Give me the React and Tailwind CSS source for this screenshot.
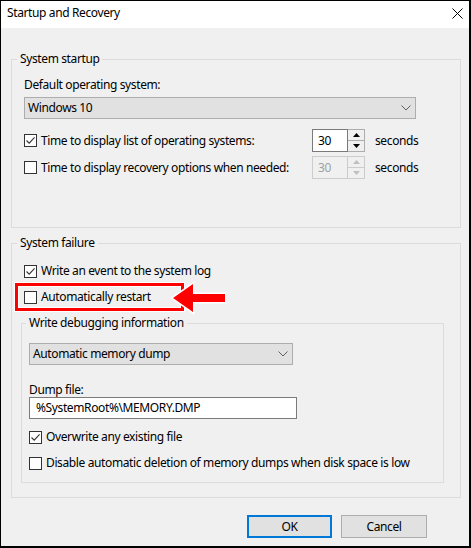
import React from 'react';

const Check = ({ checked }) => (
  <span className="w-[13px] h-[13px] border border-[#333333] bg-white flex items-center justify-center shrink-0">
    {checked && (
      <svg width="11" height="11" viewBox="0 0 11 11">
        <path d="M1.5 5.5 L4.2 8.2 L9.6 2.4" stroke="#333333" fill="none" strokeWidth="1.1" />
      </svg>
    )}
  </span>
);

const CheckRow = ({ checked, children, className = '' }) => (
  <div className={`flex items-center gap-[4px] h-[16px] leading-[16px] ${className}`}>
    <Check checked={checked} />
    <span>{children}</span>
  </div>
);

const Chevron = () => (
  <svg width="10" height="6" viewBox="0 0 10 6">
    <path d="M0.5 0.5 L5 5 L9.5 0.5" stroke="#606060" fill="none" strokeWidth="1" />
  </svg>
);

const Select = ({ value, className }) => (
  <div className={`h-[22px] bg-[#e1e1e1] border border-[#adadad] flex items-center justify-between pl-[3px] pr-[4px] ${className}`}>
    <span>{value}</span>
    <Chevron />
  </div>
);

const Tri = ({ up, disabled }) => (
  <svg width="7" height="4" viewBox="0 0 7 4">
    <path d={up ? 'M0 4 L3.5 0 L7 4 Z' : 'M0 0 L3.5 4 L7 0 Z'} fill={disabled ? '#bfbfbf' : '#000000'} />
  </svg>
);

const Spin = ({ disabled }) => (
  <div className="flex h-[23px] w-[53px]">
    <div
      className={`w-[36px] border pl-[5px] leading-[21px] ${
        disabled ? 'border-[#cccccc] bg-[#f0f0f0] text-[#a0a0a0]' : 'border-[#7a7a7a] bg-white'
      }`}
    >
      30
    </div>
    <div className={`w-[17px] flex flex-col border border-l-0 ${disabled ? 'border-[#cccccc]' : 'border-[#adadad]'}`}>
      <div className={`flex-1 flex items-center justify-center border-b ${disabled ? 'border-[#cccccc]' : 'border-[#adadad]'}`}>
        <Tri up disabled={disabled} />
      </div>
      <div className="flex-1 flex items-center justify-center">
        <Tri disabled={disabled} />
      </div>
    </div>
  </div>
);

export default function App() {
  return (
    <div className="w-[471px] h-[548px] flex flex-col border-l border-t border-r-2 border-b-2 border-black text-[12px] tracking-[-0.38px] text-black font-['Noto_Sans',sans-serif] relative">
      {/* title bar */}
      <div className="h-[27px] bg-white flex justify-between items-start pl-[6px] pr-[6px] pt-[4px] leading-[16px]">
        <span>Startup and Recovery</span>
        <svg width="11" height="11" viewBox="0 0 11 11" className="mt-[3px]">
          <path d="M0.5 0.5 L10.5 10.5 M10.5 0.5 L0.5 10.5" stroke="#000" strokeWidth="1" />
        </svg>
      </div>

      <div className="flex-1 bg-[#f0f0f0] pl-[10px] pr-[8px]">
        <fieldset className="mt-[23px] border border-[#dcdcdc] pl-[12px] pb-[48px]">
          <legend className="-ml-[7px] px-[3px] leading-[16px]">System startup</legend>
          <div className="mt-[10px] leading-[16px]">Default operating system:</div>
          <Select value="Windows 10" className="mt-[4px] w-[392px]" />
          <div className="mt-[10px] flex items-center h-[23px]">
            <CheckRow checked className="w-[288px]">Time to display list of operating systems:</CheckRow>
            <Spin />
            <span className="ml-[10px]">seconds</span>
          </div>
          <div className="mt-[4px] flex items-center h-[23px]">
            <CheckRow className="w-[288px]">Time to display recovery options when needed:</CheckRow>
            <Spin disabled />
            <span className="ml-[10px]">seconds</span>
          </div>
        </fieldset>

        <fieldset className="mt-[7px] border border-[#dcdcdc] pl-[9px] pr-[16px] pb-[14px]">
          <legend className="-ml-[4px] px-[3px] leading-[16px]">System failure</legend>
          <CheckRow checked className="mt-[12px] ml-[3px]">Write an event to the system log</CheckRow>
          <CheckRow className="mt-[10px] ml-[3px]">Automatically restart</CheckRow>

          <fieldset className="mt-[10px] border border-[#dcdcdc] pl-[7px] pb-[11px]">
            <legend className="-ml-[3px] px-[3px] leading-[16px]">Write debugging information</legend>
            <Select value="Automatic memory dump" className="mt-[12px] w-[264px]" />
            <div className="mt-[17px] leading-[15px]">Dump file:</div>
            <div className="w-[268px] h-[22px] bg-white border border-[#7a7a7a] pl-[6px] leading-[20px]">
              %SystemRoot%\MEMORY.DMP
            </div>
            <CheckRow checked className="mt-[10px]">Overwrite any existing file</CheckRow>
            <CheckRow className="mt-[10px]">Disable automatic deletion of memory dumps when disk space is low</CheckRow>
          </fieldset>
        </fieldset>

        <div className="mt-[17px] flex justify-end gap-[9px] mr-[34px]">
          <button className="w-[85px] h-[23px] bg-[#e1e1e1] border-2 border-[#0078d7]">OK</button>
          <button className="w-[86px] h-[23px] bg-[#e1e1e1] border border-[#adadad]">Cancel</button>
        </div>
      </div>

      {/* red annotation */}
      <div className="absolute left-[14px] top-[282px] w-[169px] h-[28px] border-[3px] border-[#ff0000] shadow-[0_0_0_1px_white,inset_0_0_0_1px_white]" />
      <svg className="absolute left-[166px] top-[278px]" width="62" height="38" viewBox="0 0 62 38">
        <polygon
          points="6,19 26,5 26,15 58,15 58,23 26,23 26,33"
          fill="#ff0000"
          stroke="#ffffff"
          strokeWidth="3"
          strokeLinejoin="miter"
          paintOrder="stroke"
        />
      </svg>
    </div>
  );
}
